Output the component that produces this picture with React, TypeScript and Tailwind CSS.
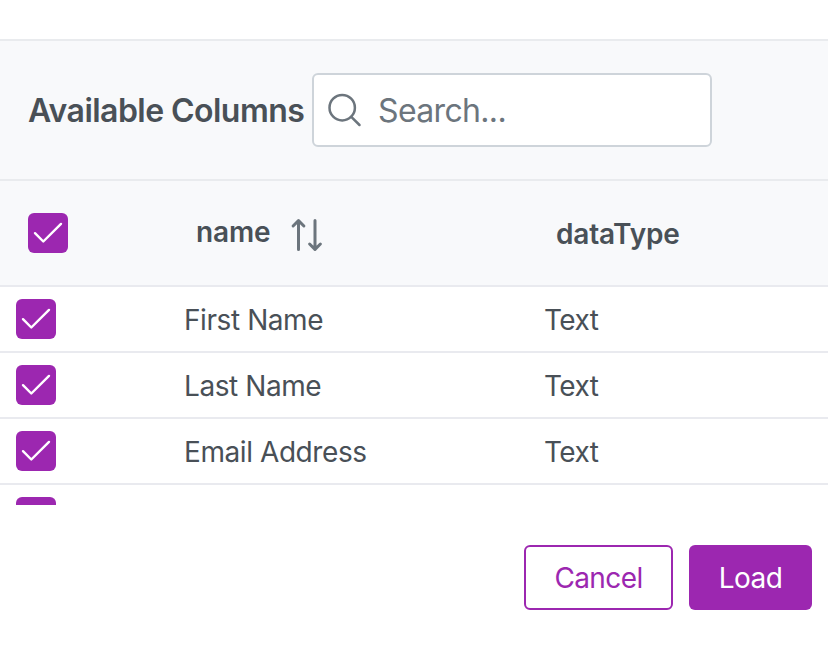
const rows = [
  { name: "First Name", dataType: "Text" },
  { name: "Last Name", dataType: "Text" },
  { name: "Email Address", dataType: "Text" },
  { name: "", dataType: "" },
];

function Checkbox() {
  return (
    <span role="checkbox" aria-checked="true" className="block size-10 shrink-0 rounded-md bg-[#9c27b0]">
      <svg viewBox="0 0 40 40" className="size-10" fill="none" stroke="#fff" strokeWidth="2.4" strokeLinecap="round" strokeLinejoin="round">
        <path d="M7 20.2 15.3 28.5 33 10.9" />
      </svg>
    </span>
  );
}

function SearchIcon() {
  return (
    <svg viewBox="0 0 34 34" className="size-[34px] shrink-0" fill="none" stroke="#6c757d" strokeWidth="2.5" strokeLinecap="round">
      <circle cx="14.2" cy="14.7" r="12.7" />
      <path d="M23.3 23.9 31.5 32" />
    </svg>
  );
}

function SortIcon() {
  return (
    <svg viewBox="0 0 34 34" className="size-[34px] shrink-0" fill="none" stroke="#6c757d" strokeWidth="3" strokeLinecap="round" strokeLinejoin="round">
      <path d="M8.5 31.5V2.5M3.1 8 8.5 2.6 13.9 8" />
      <path d="M25 2.5V31.5M19.6 26 25 31.4 30.4 26" />
    </svg>
  );
}

export default function App() {
  return (
    <div className="flex h-[658px] w-[828px] flex-col overflow-hidden bg-white pt-[39px] font-['Inter','Liberation_Sans',sans-serif] text-[28px] leading-[34px] text-[#495057]">
      <div className="flex h-[142px] shrink-0 items-center border-y-2 border-[#e9ebee] bg-[#f8f9fb] pl-7">
        <h2 className="w-[284px] whitespace-nowrap pt-[2px] text-[32px] font-semibold leading-10 tracking-[-0.54px]">Available Columns</h2>
        <label className="flex h-[74px] w-[400px] items-center gap-4 rounded-md border-2 border-[#ced4da] bg-white pl-[14px]">
          <SearchIcon />
          <input placeholder="Search..." className="w-[300px] bg-transparent pt-[2px] text-[32px] leading-10 tracking-[-0.65px] outline-none placeholder:text-[#6c757d]" />
        </label>
      </div>

      <div className="grid h-[106px] shrink-0 grid-cols-[168px_360px_1fr] items-center border-b-2 border-[#e9eaef] bg-[#f8f9fb] pl-7 font-semibold tracking-[-0.15px]">
        <Checkbox />
        <div className="flex items-center gap-[20px] pt-[3px]">
          <span className="-mt-[5px] w-[74px] whitespace-nowrap">name</span>
          <SortIcon />
        </div>
        <span className="pt-[2px]">dataType</span>
      </div>

      <div className="h-[218px] shrink-0 overflow-hidden tracking-[-0.52px]">
        {rows.map((row, index) => (
          <div key={index} className="grid h-[66px] grid-cols-[168px_360px_1fr] items-center border-b-2 border-[#e9eaef] pl-4">
            <Checkbox />
            <span className="pt-[2px] tracking-[-0.42px]">{row.name}</span>
            <span className="pt-[2px]">{row.dataType}</span>
          </div>
        ))}
      </div>

      <div className="flex justify-end gap-4 pr-4 pt-10 tracking-[-0.6px]">
        <button className="h-[65px] w-[149px] rounded-md border-2 border-[#9c27b0] pt-px text-[#9c27b0]">Cancel</button>
        <button className="h-[65px] w-[123px] rounded-md bg-[#9c27b0] pt-px text-white">Load</button>
      </div>
    </div>
  );
}
